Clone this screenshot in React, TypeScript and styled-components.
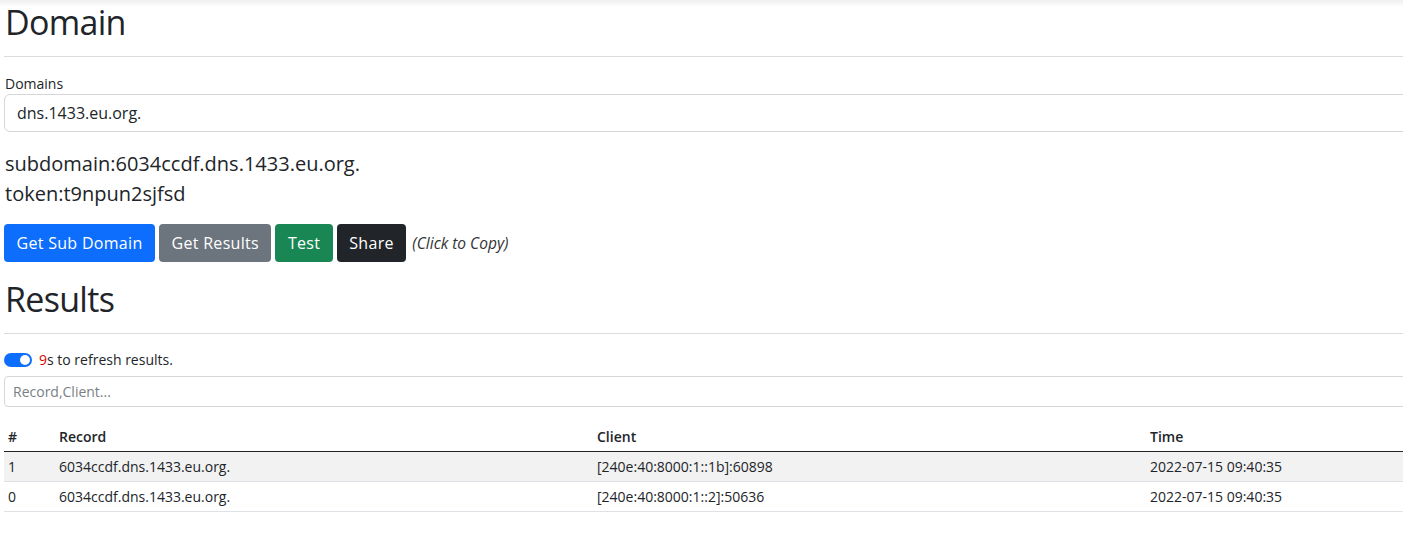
import React from "react";
import styled, { createGlobalStyle } from "styled-components";

const Global = createGlobalStyle`
  html, body { margin: 0; padding: 0; }
  body {
    font-family: "Open Sans", "Noto Sans", sans-serif;
    color: #212529;
    background: linear-gradient(#efefef 0px, #ffffff 7px) no-repeat, #fff;
    overflow-x: hidden;
  }
  * { box-sizing: border-box; }
`;

const Page = styled.div`
  width: 1430px;
  padding: 0 0 0 4px;
`;

const Title = styled.h1<{ $top?: number }>`
  font-size: 34px;
  line-height: 43px;
  font-weight: 400;
  letter-spacing: -0.7px;
  margin: ${(p) => p.$top ?? 0}px 0 0 1px;
  padding-top: 1px;
`;

const Rule = styled.hr`
  border: 0;
  border-top: 1px solid #dcdcdc;
  margin: 12px 0 0;
  height: 0;
`;

const Label = styled.label`
  display: block;
  font-size: 14px;
  line-height: 21px;
  margin-top: 16px;
  padding-left: 1px;
`;

const TextInput = styled.input<{ $small?: boolean }>`
  display: block;
  width: 100%;
  height: ${(p) => (p.$small ? 31 : 38)}px;
  border: 1px solid #d4d7da;
  border-radius: ${(p) => (p.$small ? 4 : 6)}px;
  padding: 0 ${(p) => (p.$small ? 8 : 12)}px;
  font-family: inherit;
  font-size: ${(p) => (p.$small ? 14 : 16)}px;
  color: #212529;
  background: #fff;
  outline: none;
  &::placeholder { color: #7a7f84; }
`;

const Info = styled.div`
  margin-top: 17px;
  font-size: 20px;
  line-height: 30px;
  padding-left: 1px;
`;

const ButtonRow = styled.div`
  display: flex;
  align-items: center;
  gap: 4px;
  margin-top: 15px;
`;

const Button = styled.button<{ $bg: string }>`
  height: 38px;
  padding: 0 12.5px;
  border: 0;
  border-radius: 4px;
  background: ${(p) => p.$bg};
  color: #fff;
  font-family: inherit;
  font-size: 16px;
  line-height: 24px;
  letter-spacing: 0.3px;
`;

const Hint = styled.span`
  font-size: 15.5px;
  font-style: italic;
  color: #333;
  margin-left: 2px;
`;

const RefreshRow = styled.div`
  display: flex;
  align-items: center;
  gap: 7px;
  margin-top: 15px;
  font-size: 14px;
  line-height: 21px;
`;

const Switch = styled.span`
  width: 28px;
  height: 14px;
  border-radius: 7px;
  background: #0d6efd;
  display: flex;
  align-items: center;
  justify-content: flex-end;
  padding-right: 2px;
  &::after {
    content: "";
    width: 10px;
    height: 10px;
    border-radius: 50%;
    background: #fff;
  }
`;

const Count = styled.span`
  color: #e00000;
`;

const SearchWrap = styled.div`
  margin-top: 6px;
`;

const Table = styled.table`
  width: 100%;
  margin-top: 15px;
  border-collapse: collapse;
  font-size: 14px;
  line-height: 21px;
  table-layout: fixed;
`;

const Th = styled.th<{ $w?: number }>`
  text-align: left;
  font-weight: 600;
  padding: 4px 4px;
  border-bottom: 1px solid #212529;
  width: ${(p) => (p.$w ? `${p.$w}px` : "auto")};
`;

const Row = styled.tr<{ $striped?: boolean }>`
  background: ${(p) => (p.$striped ? "#f2f2f2" : "#fff")};
`;

const Td = styled.td`
  padding: 4px 4px;
  border-bottom: 1px solid #dee2e6;
  white-space: nowrap;
`;

const rows = [
  { id: 1, record: "6034ccdf.dns.1433.eu.org.", client: "[240e:40:8000:1::1b]:60898", time: "2022-07-15 09:40:35" },
  { id: 0, record: "6034ccdf.dns.1433.eu.org.", client: "[240e:40:8000:1::2]:50636", time: "2022-07-15 09:40:35" },
];

export default function App() {
  return (
    <>
      <Global />
      <Page>
        <Title>Domain</Title>
        <Rule />
        <Label>Domains</Label>
        <TextInput defaultValue="dns.1433.eu.org." />
        <Info>
          <div>subdomain:6034ccdf.dns.1433.eu.org.</div>
          <div>token:t9npun2sjfsd</div>
        </Info>
        <ButtonRow>
          <Button $bg="#0d6efd">Get Sub Domain</Button>
          <Button $bg="#6c757d">Get Results</Button>
          <Button $bg="#198754">Test</Button>
          <Button $bg="#212529">Share</Button>
          <Hint>(Click to Copy)</Hint>
        </ButtonRow>
        <Title $top={15}>Results</Title>
        <Rule />
        <RefreshRow>
          <Switch />
          <span>
            <Count>9</Count>s to refresh results.
          </span>
        </RefreshRow>
        <SearchWrap>
          <TextInput $small placeholder="Record,Client..." />
        </SearchWrap>
        <Table>
          <thead>
            <tr>
              <Th $w={51}>#</Th>
              <Th $w={538}>Record</Th>
              <Th $w={553}>Client</Th>
              <Th>Time</Th>
            </tr>
          </thead>
          <tbody>
            {rows.map((r, i) => (
              <Row key={r.id} $striped={i === 0}>
                <Td>{r.id}</Td>
                <Td>{r.record}</Td>
                <Td>{r.client}</Td>
                <Td>{r.time}</Td>
              </Row>
            ))}
          </tbody>
        </Table>
      </Page>
    </>
  );
}
